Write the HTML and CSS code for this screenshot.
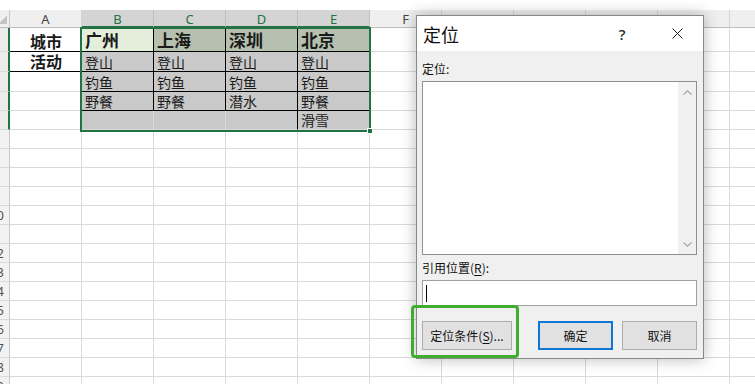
FILE: index.html
```html
<!DOCTYPE html>
<html lang="zh-CN">
<head>
<meta charset="utf-8">
<title>定位</title>
<link rel="stylesheet" href="styles.css">
</head>
<body>
<div class="sheet">
  <div class="row hdr">
    <div class="corner"></div>
    <div class="ch">A</div>
    <div class="ch sel">B</div>
    <div class="ch sel">C</div>
    <div class="ch sel">D</div>
    <div class="ch sel">E</div>
    <div class="ch">F</div>
    <div class="ch">G</div>
    <div class="ch">H</div>
    <div class="ch">I</div>
    <div class="ch">J</div>
    <div class="ch"></div>
  </div>
  <div class="row r1">
    <div class="rh sel"></div>
    <div class="c key kb">城市</div>
    <div class="c h act k">广州</div>
    <div class="c h hs k">上海</div>
    <div class="c h hs k">深圳</div>
    <div class="c h hs k">北京</div>
  </div>
  <div class="row r2">
    <div class="rh sel"></div>
    <div class="c key kb">活动</div>
    <div class="c g k">登山</div>
    <div class="c g k">登山</div>
    <div class="c g k">登山</div>
    <div class="c g k">登山</div>
  </div>
  <div class="row r3">
    <div class="rh sel"></div>
    <div class="c"></div>
    <div class="c g k">钓鱼</div>
    <div class="c g k">钓鱼</div>
    <div class="c g k">钓鱼</div>
    <div class="c g k">钓鱼</div>
  </div>
  <div class="row">
    <div class="rh sel"></div>
    <div class="c"></div>
    <div class="c g k">野餐</div>
    <div class="c g k">野餐</div>
    <div class="c g k">潜水</div>
    <div class="c g k">野餐</div>
  </div>
  <div class="row">
    <div class="rh sel"></div>
    <div class="c"></div>
    <div class="c g"></div>
    <div class="c g"></div>
    <div class="c g kr"></div>
    <div class="c g kr">滑雪</div>
  </div>
  <div class="row"><div class="rh"></div></div>
  <div class="row"><div class="rh"></div></div>
  <div class="row"><div class="rh"></div></div>
  <div class="row"><div class="rh"></div></div>
  <div class="row"><div class="rh"><span>10</span></div></div>
  <div class="row"><div class="rh"><span class="dim">11</span></div></div>
  <div class="row"><div class="rh"><span>12</span></div></div>
  <div class="row"><div class="rh"><span>13</span></div></div>
  <div class="row"><div class="rh"><span>14</span></div></div>
  <div class="row"><div class="rh"><span>15</span></div></div>
  <div class="row"><div class="rh"><span>16</span></div></div>
  <div class="row"><div class="rh"><span>17</span></div></div>
  <div class="row"><div class="rh"><span>18</span></div></div>
  <div class="row"><div class="rh"><span>19</span></div></div>
</div>

<div class="selection"></div>
<div class="handle"></div>

<div class="dialog">
  <div class="titlebar">
    <span class="title">定位</span>
    <span class="help">?</span>
    <span class="close">
      <svg width="11" height="11" viewBox="0 0 11 11"><path d="M0.5 0.5L10.5 10.5M10.5 0.5L0.5 10.5" stroke="#1a1a1a" stroke-width="1" fill="none"/></svg>
    </span>
  </div>
  <div class="dbody">
    <div class="lbl">定位:</div>
    <div class="list">
      <div class="scroll">
        <svg width="9" height="5" viewBox="0 0 9 5"><path d="M0.5 4.5L4.5 0.8L8.5 4.5" fill="none" stroke="#a6a6a6" stroke-width="1.2"/></svg>
        <svg width="9" height="5" viewBox="0 0 9 5"><path d="M0.5 0.5L4.5 4.2L8.5 0.5" fill="none" stroke="#a6a6a6" stroke-width="1.2"/></svg>
      </div>
    </div>
    <div class="lbl lbl2">引用位置(<u>R</u>):</div>
    <div class="input"><span class="caret"></span></div>
    <div class="btns">
      <button class="btn wide">定位条件(<u>S</u>)...</button>
      <button class="btn primary">确定</button>
      <button class="btn">取消</button>
    </div>
  </div>
</div>

<div class="highlight"></div>
</body>
</html>
```

FILE: styles.css
```css
* { box-sizing: border-box; }
html, body { margin: 0; padding: 0; }
body {
  width: 755px;
  height: 384px;
  overflow: hidden;
  position: relative;
  background: #fff;
  font-family: "Noto Sans CJK SC", "Noto Sans", sans-serif;
}

/* ---------- spreadsheet ---------- */
.sheet { padding-top: 10px; width: 820px; }

.row {
  display: flex;
  height: 19px;
  background:
    linear-gradient(to top, #dadada 0 1px, transparent 1px),
    repeating-linear-gradient(to right, transparent 0 71px, #dadada 71px 72px);
  background-position: 0 0, 10px 0;
  background-repeat: no-repeat, repeat-x;
}
.r1 { height: 24px; }
.r2, .r3 { height: 20px; }

.hdr {
  height: 18px;
  background: #efefef;
}
.corner {
  width: 10px;
  flex: none;
  border-right: 1px solid #c8c8c8;
  border-bottom: 1px solid #bdbdbd;
  background: linear-gradient(135deg, transparent 50%, #c4c4c4 50%) no-repeat 0 4px / 7px 10px, #efefef;
}
.ch {
  width: 72px;
  flex: none;
  border-right: 1px solid #d4d4d4;
  border-bottom: 1px solid #bdbdbd;
  font-family: "Noto Sans", sans-serif;
  font-size: 13px;
  line-height: 17px;
  padding-top: 1px;
  text-align: center;
  color: #444;
}
.ch.sel {
  background: #d4d4d4;
  color: #217346;
  border-bottom: 2px solid #217346;
  border-right-color: #bfbfbf;
}

.rh {
  width: 10px;
  flex: none;
  height: 100%;
  border-right: 1px solid #c8c8c8;
  border-bottom: 1px solid #dadada;
  background: #f2f2f2;
  overflow: hidden;
  display: flex;
  justify-content: flex-end;
  align-items: center;
  font-family: "Noto Sans", sans-serif;
  font-size: 13px;
  color: #555;
}
.rh span { margin-right: 5px; }
.rh span.dim { margin-right: 8px; }
.rh.sel {
  border-right: 2px solid #217346;
  background: #ececec;
}

.c {
  width: 72px;
  flex: none;
  height: 100%;
  border-right: 1px solid #dadada;
  border-bottom: 1px solid #dadada;
  background: #fff;
  display: flex;
  align-items: flex-end;
  padding: 0 2px 0 3px;
  font-size: 14px;
  line-height: 18px;
  color: #1a1a1a;
  white-space: nowrap;
}
.key {
  justify-content: center;
  font-weight: 700;
  font-size: 16px;
  line-height: 19px;
}
.h {
  font-weight: 700;
  font-size: 17px;
  line-height: 22px;
}
.act { background: #e3eedb; }
.hs { background: #b5c1ae; }
.g { background: #c9c9c9; }
.k { border-right-color: #000; border-bottom-color: #000; }
.kb { border-bottom-color: #000; }
.kr { border-right-color: #000; }

.selection {
  position: absolute;
  left: 80px;
  top: 27px;
  width: 291px;
  height: 105px;
  border: 2px solid #217346;
}
.handle {
  position: absolute;
  left: 367px;
  top: 128px;
  width: 6px;
  height: 6px;
  background: #217346;
  border: 1px solid #fff;
}

/* ---------- dialog ---------- */
.dialog {
  position: absolute;
  left: 416px;
  top: 15px;
  width: 288px;
  height: 344px;
  border: 1px solid #888;
  background: #f0f0f0;
  box-shadow: 0 0 14px rgba(0, 0, 0, 0.28);
  display: flex;
  flex-direction: column;
}
.titlebar {
  height: 35px;
  background: #fff;
  display: flex;
  align-items: center;
  padding: 0 3px 0 6px;
}
.title {
  flex: 1;
  font-size: 18px;
  line-height: 24px;
  color: #111;
  padding-top: 1px;
}
.help {
  width: 30px;
  margin-right: 17px;
  text-align: center;
  font-family: "Noto Sans", sans-serif;
  font-size: 15px;
  line-height: 18px;
  font-weight: 500;
  color: #222;
}
.close {
  width: 46px;
  height: 18px;
  display: flex;
  justify-content: center;
  align-items: center;
}
.dbody {
  flex: 1;
  padding: 10px 6px 0 5px;
  display: flex;
  flex-direction: column;
}
.lbl {
  font-size: 12px;
  line-height: 16px;
  color: #111;
  margin-bottom: 4px;
}
.lbl2 { margin-top: 5px; }
.lbl u { text-underline-offset: 2px; }
.list {
  height: 174px;
  border: 1px solid #8f8f8f;
  background: #fff;
  display: flex;
  justify-content: flex-end;
}
.scroll {
  width: 18px;
  background: #f0f0f0;
  display: flex;
  flex-direction: column;
  justify-content: space-between;
  align-items: center;
  padding: 8px 0 7px;
}
.input {
  height: 26px;
  border: 1px solid #a0a0a0;
  background: #fff;
  display: flex;
  align-items: center;
  padding-left: 3px;
}
.caret {
  width: 1px;
  height: 17px;
  background: #000;
}
.btns {
  margin-top: 15px;
  display: flex;
}
.btn {
  height: 29px;
  width: 75px;
  border: 1px solid #adadad;
  background: #e1e1e1;
  font-family: "Noto Sans CJK SC", sans-serif;
  font-size: 12px;
  color: #111;
  padding: 0;
}
.btn.wide { width: 90px; margin-right: auto; }
.btn.primary {
  border: 2px solid #0f78d4;
  margin-right: 9px;
}
.btn u { text-underline-offset: 2px; }

.highlight {
  position: absolute;
  left: 411px;
  top: 305px;
  width: 108px;
  height: 53px;
  border: 3px solid #3fae2e;
  border-radius: 4px;
}
```
